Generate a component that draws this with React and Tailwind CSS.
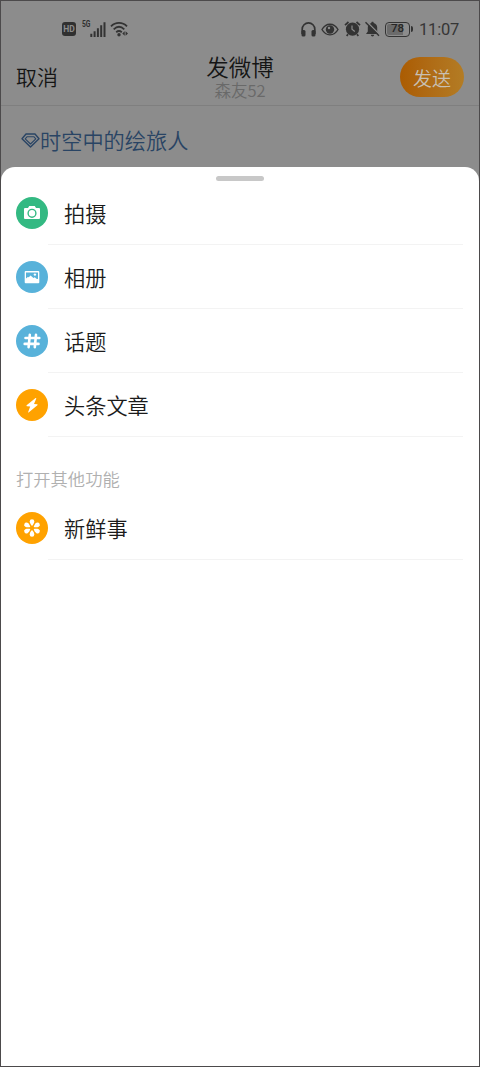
import React from "react";

function HdIcon() {
  return (
    <div className="flex h-[14px] w-[14px] shrink-0 items-center justify-center rounded-[3px] bg-[#303030] font-['Roboto',sans-serif] text-[8.500px] font-bold leading-none text-[#8c8c8c]">
      <span className="scale-y-115">HD</span>
    </div>
  );
}

function SignalIcon() {
  return (
    <svg width="16" height="15" viewBox="0 0 16 15" className="shrink-0">
      <path d="M1.300 11.800V15M4.600 9.300V15M7.900 6.300V15M11.200 3.300V15M14.500 0.300V15" stroke="#333" strokeWidth="2" />
    </svg>
  );
}

function WifiIcon() {
  return (
    <svg width="20" height="16" viewBox="0 0 20 16" className="shrink-0">
      <path d="M1 5.300C5.500 0.700 12.500 0.700 17 5.300M3.700 8.300C7 5.200 11 5.200 14.300 8.300M6.200 11.200C8 9.700 10 9.700 11.800 11.200" fill="none" stroke="#333" strokeWidth="1.800" />
      <circle cx="9" cy="13.700" r="1.700" fill="#333" />
      <path d="M14.700 10.300v4.400L12.300 12.500ZM15.600 10.300v4.400L18 12.500Z" fill="#333" />
    </svg>
  );
}

function HeadphonesIcon() {
  return (
    <svg width="15" height="15" viewBox="0 0 15 15" className="shrink-0">
      <path d="M1.200 12V7.200a6.300 6.300 0 0 1 12.600 0V12" fill="none" stroke="#333" strokeWidth="1.700" />
      <rect x="0.500" y="8" width="4" height="6.500" rx="1.500" fill="#333" />
      <rect x="10.500" y="8" width="4" height="6.500" rx="1.500" fill="#333" />
    </svg>
  );
}

function EyeIcon() {
  return (
    <svg width="18" height="13" viewBox="0 0 18 13" className="shrink-0">
      <path d="M1 6.500C5 -0.600 13 -0.600 17 6.500C13 13.600 5 13.600 1 6.500Z" fill="none" stroke="#333" strokeWidth="1.400" />
      <circle cx="9" cy="6.500" r="4.200" fill="#333" />
      <circle cx="8" cy="5" r="1.200" fill="#8c8c8c" />
    </svg>
  );
}

function AlarmIcon() {
  return (
    <svg width="17" height="16" viewBox="0 0 17 16" className="shrink-0">
      <circle cx="8.500" cy="8.200" r="6.600" fill="#333" />
      <path d="M1 4.200L4.500 1M16 4.200L12.500 1M4 13.200L2.700 15M13 13.200L14.300 15" stroke="#333" strokeWidth="1.700" />
      <path d="M8 4.500V8.300L10.800 10.400" fill="none" stroke="#8c8c8c" strokeWidth="1.200" />
    </svg>
  );
}

function MutedBellIcon() {
  return (
    <svg width="15" height="16" viewBox="0 0 15 16" className="shrink-0">
      <path d="M7.500 0.700c.8 0 1.200.5 1.200 1.200 2.300.6 3.500 2.400 3.500 4.700v3.800L14 13H1l1.800-2.600V6.600c0-2.300 1.200-4.100 3.500-4.700 0-.7.4-1.200 1.200-1.200ZM5.800 13.800h3.400c-.2 1-.8 1.600-1.700 1.600s-1.500-.6-1.700-1.600Z" fill="#333" />
      <path d="M1.500 0.500L15 14" stroke="#8c8c8c" strokeWidth="1.500" />
      <path d="M0.500 1.200L14 14.700" stroke="#333" strokeWidth="1.500" />
    </svg>
  );
}

function DiamondIcon() {
  return (
    <svg width="19" height="15" viewBox="0 0 19 15" className="shrink-0">
      <path d="M5 1H14L18 5.700L9.500 14L1 5.700Z" fill="none" stroke="#294464" strokeWidth="1.400" strokeLinejoin="round" />
      <path d="M6.200 3.700H12.800L14.800 5.800L9.500 11L4.200 5.800Z" fill="none" stroke="#294464" strokeWidth="1.100" strokeLinejoin="round" />
    </svg>
  );
}

function StatusBar() {
  return (
    <div className="flex h-[47px] items-center justify-between pl-[61px] pr-[20px] pt-[9px]">
      <div className="flex items-center">
        <HdIcon />
        <span className="ml-[6px] mb-[9px] w-[8px] origin-left scale-x-75 font-['Roboto',sans-serif] text-[9px] font-bold leading-none text-[#303030]">
          5G
        </span>
        <SignalIcon />
        <span className="ml-[4px]">
          <WifiIcon />
        </span>
      </div>
      <div className="flex items-center">
        <HeadphonesIcon />
        <span className="ml-[5px]"><EyeIcon /></span>
        <span className="ml-[5px]"><AlarmIcon /></span>
        <span className="ml-[4px]"><MutedBellIcon /></span>
        <div className="ml-[5px] flex h-[15px] w-[25px] items-center justify-center rounded-[4px] border-[1.500px] border-[#333] p-[1px]">
          <div className="flex h-full w-full items-center justify-center rounded-[2px] bg-linear-to-r from-[#6b6b6b] from-78% to-[#8c8c8c] to-78% font-['Roboto',sans-serif] text-[11.500px] font-medium leading-none text-[#262626]">
            78
          </div>
        </div>
        <div className="ml-[1px] h-[6px] w-[2px] rounded-r bg-[#333]" />
        <span className="ml-[6px] mt-[2px] w-[40px] whitespace-nowrap font-['Roboto',sans-serif] text-[16.500px] font-normal tracking-[-0.2px] leading-none text-[#363636]">
          11:07
        </span>
      </div>
    </div>
  );
}

function Header() {
  return (
    <header className="grid h-[58px] grid-cols-[1fr_auto_1fr] items-center border-b border-[#7f7f7f] px-[15px]">
      <button className="justify-self-start text-[21px] leading-none text-[#151515]">取消</button>
      <div className="flex flex-col items-center">
        <h1 className="text-[22.500px] leading-[22px] text-[#151515]">发微博</h1>
        <p className="mt-[4px] text-[16.500px] leading-[18px] text-[#696969]">森友52</p>
      </div>
      <button className="h-10 w-16 justify-self-end rounded-full bg-linear-to-r from-[#ab5c02] to-[#b37c24] pt-[1px] text-[19px] leading-none text-[#c8c0b4]">
        发送
      </button>
    </header>
  );
}

const mainItems = [
  { label: "拍摄", icon: "camera", color: "bg-[#33b982]" },
  { label: "相册", icon: "album", color: "bg-[#58b2da]" },
  { label: "话题", icon: "topic", color: "bg-[#58b2da]" },
  { label: "头条文章", icon: "article", color: "bg-[#ffa200]" },
];

const otherItems = [{ label: "新鲜事", icon: "fresh", color: "bg-[#ffa200]" }];

const petals = [0, 60, 120, 180, 240, 300];

function ItemIcon({ icon }) {
  return (
    <svg width="32" height="32" viewBox="0 0 32 32" fill="#fff">
      {icon === "camera" && (
        <>
          <path d="M9 11H12L13.200 9H18.800L20 11H23q1 0 1 1V21q0 1-1 1H9q-1 0-1-1V12q0-1 1-1Z" />
          <circle cx="16" cy="16.300" r="3.900" fill="none" stroke="#33b982" strokeWidth="1.400" />
        </>
      )}
      {icon === "album" && (
        <>
          <rect x="8.700" y="10" width="14.600" height="12.300" rx="1" />
          <path d="M10 11.400H22V18L20.400 17.800L18.800 16.200L17.500 17L14.500 14.500L12.800 16.300L11.800 15.900L10 17.600Z" fill="#58b2da" />
          <circle cx="18.900" cy="13.600" r="1.200" />
        </>
      )}
      {icon === "topic" && (
        <path d="M13.800 9.800L12.600 22.200M20 9.800L18.800 22.200M9.500 13H23.300M8.700 18.900H22.500" fill="none" stroke="#fff" strokeWidth="2.600" strokeLinecap="round" />
      )}
      {icon === "article" && (
        <path d="M19.600 9L10.600 16.200Q10.200 17 11 17.300L14.200 17.600L12.100 23.200Q12.300 23.700 12.900 23.300L21.400 16.300Q22 15.500 21.100 15.300L18 15L20.300 9.500Q20.300 8.600 19.600 9Z" />
      )}
      {icon === "fresh" &&
        petals.map((angle) => (
          <path key={angle} d="M16 14C15.300 13.400 13.700 11.200 13.700 9.600A2.300 2.300 0 0 1 18.300 9.600C18.300 11.200 16.700 13.400 16 14Z" transform={`rotate(${angle} 16 16)`} />
        ))}
    </svg>
  );
}

function MenuItem({ item }) {
  return (
    <li className="flex h-16 pl-[15px] pr-[16px]">
      <div className={`mt-4 h-8 w-8 shrink-0 rounded-full ${item.color}`}>
        <ItemIcon icon={item.icon} />
      </div>
      <div className="flex flex-1 items-center border-b border-[#f3f3f3] pl-4 text-[21.200px] leading-none text-[#1b1b1b]">
        {item.label}
      </div>
    </li>
  );
}

export default function App() {
  return (
    <div className="flex h-[1067px] w-[480px] flex-col overflow-hidden border border-[#4c4a4b] bg-[#8c8c8c] font-['Noto_Sans_CJK_SC',sans-serif] font-[350]">
      <StatusBar />
      <Header />
      <div className="flex h-[61px] shrink-0 items-start pl-[20px] pt-[24px] text-[21.200px] leading-[20px] text-[#294464]">
        <span className="mt-[3px]"><DiamondIcon /></span>
        <span>时空中的绘旅人</span>
      </div>
      <main className="flex-1 rounded-t-[14px] bg-white pt-[9px]">
        <div className="mx-auto h-[5px] w-12 rounded-full bg-[#c8c8c8]" />
        <ul>
          {mainItems.map((item) => (
            <MenuItem key={item.label} item={item} />
          ))}
        </ul>
        <h2 className="h-[59px] pl-[15px] pt-[33px] text-[17.300px] leading-[18px] text-[#b0b0b0]">打开其他功能</h2>
        <ul>
          {otherItems.map((item) => (
            <MenuItem key={item.label} item={item} />
          ))}
        </ul>
      </main>
    </div>
  );
}
